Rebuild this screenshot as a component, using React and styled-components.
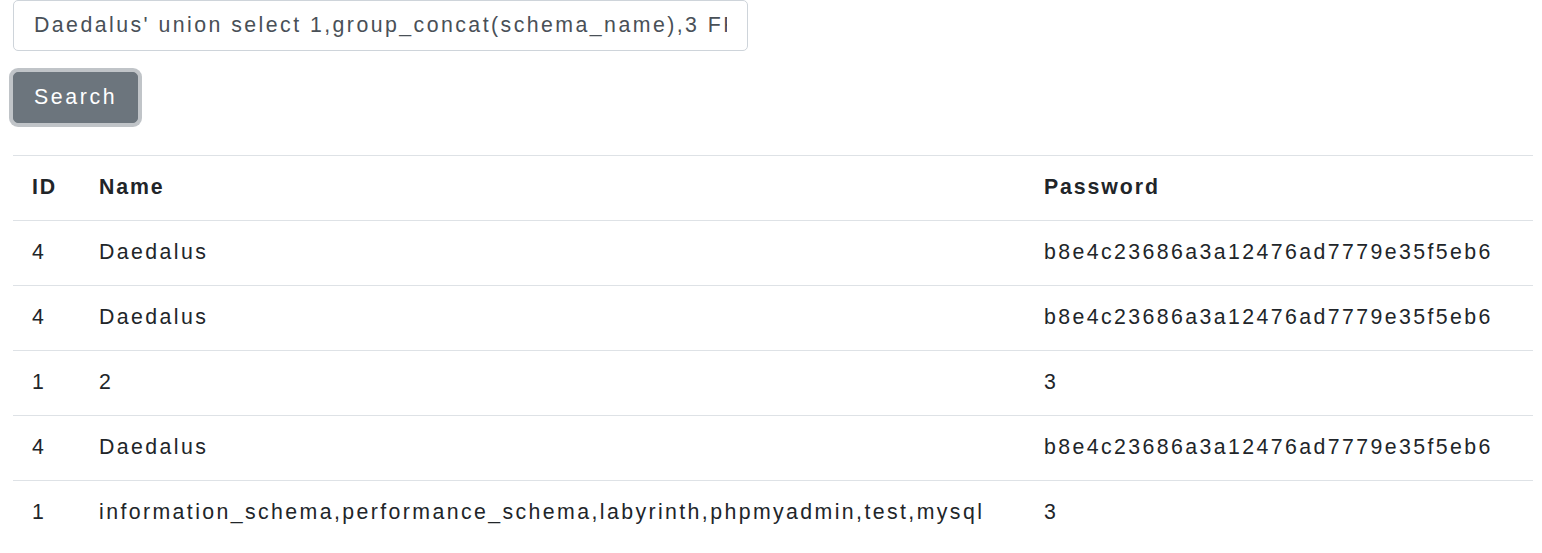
import React from 'react'
import styled, { createGlobalStyle } from 'styled-components'

const GlobalStyle = createGlobalStyle`
  html, body {
    margin: 0;
    padding: 0;
    background: #fff;
  }
  body {
    font-family: "Liberation Sans", Arial, sans-serif;
    font-size: 21.3px;
    line-height: 1.5;
    color: #212529;
    letter-spacing: 2.4px;
  }
`

const Page = styled.div`
  padding: 0 9px 0 13px;
`

const SearchForm = styled.form`
  display: flex;
  flex-direction: column;
  align-items: flex-start;
  gap: 21px;
`

const Input = styled.input`
  box-sizing: border-box;
  width: 735px;
  height: 51px;
  padding: 0 20px;
  font: inherit;
  letter-spacing: 2.45px;
  color: #495057;
  background: #fff;
  border: 1px solid #ced4da;
  border-radius: 5px;
  outline: none;
`

const Button = styled.button`
  box-sizing: border-box;
  width: 125px;
  height: 51px;
  padding: 0 20px;
  font: inherit;
  letter-spacing: 2.6px;
  color: #fff;
  background: #6c757d;
  border: 1px solid #6c757d;
  border-radius: 5px;
  box-shadow: 0 0 0 4px rgba(130, 138, 145, 0.5);
  text-align: left;
  cursor: pointer;
`

const Table = styled.table`
  width: 100%;
  margin-top: 32px;
  border-collapse: collapse;
  table-layout: fixed;
`

const Th = styled.th`
  box-sizing: border-box;
  width: ${props => props.w || 'auto'};
  padding: 16px 19px;
  text-align: left;
  font-weight: bold;
  letter-spacing: 1.9px;
  vertical-align: bottom;
  border-top: 1px solid #dee2e6;
  border-bottom: 1px solid #dee2e6;
`

const Td = styled.td`
  padding: 16px 19px;
  border-top: 1px solid #dee2e6;
  white-space: nowrap;
`

const rows = [
  ['4', 'Daedalus', 'b8e4c23686a3a12476ad7779e35f5eb6'],
  ['4', 'Daedalus', 'b8e4c23686a3a12476ad7779e35f5eb6'],
  ['1', '2', '3'],
  ['4', 'Daedalus', 'b8e4c23686a3a12476ad7779e35f5eb6'],
  ['1', 'information_schema,performance_schema,labyrinth,phpmyadmin,test,mysql', '3'],
]

export default function App() {
  return (
    <Page>
      <GlobalStyle />
      <SearchForm onSubmit={e => e.preventDefault()}>
        <Input
          type="text"
          defaultValue="Daedalus' union select 1,group_concat(schema_name),3 FROM information_schema.schemata-- -"
        />
        <Button type="submit">Search</Button>
      </SearchForm>

      <Table>
        <thead>
          <tr>
            <Th w="67px">ID</Th>
            <Th w="945px">Name</Th>
            <Th>Password</Th>
          </tr>
        </thead>
        <tbody>
          {rows.map((r, i) => (
            <tr key={i}>
              <Td>{r[0]}</Td>
              <Td>{r[1]}</Td>
              <Td>{r[2]}</Td>
            </tr>
          ))}
        </tbody>
      </Table>
    </Page>
  )
}
